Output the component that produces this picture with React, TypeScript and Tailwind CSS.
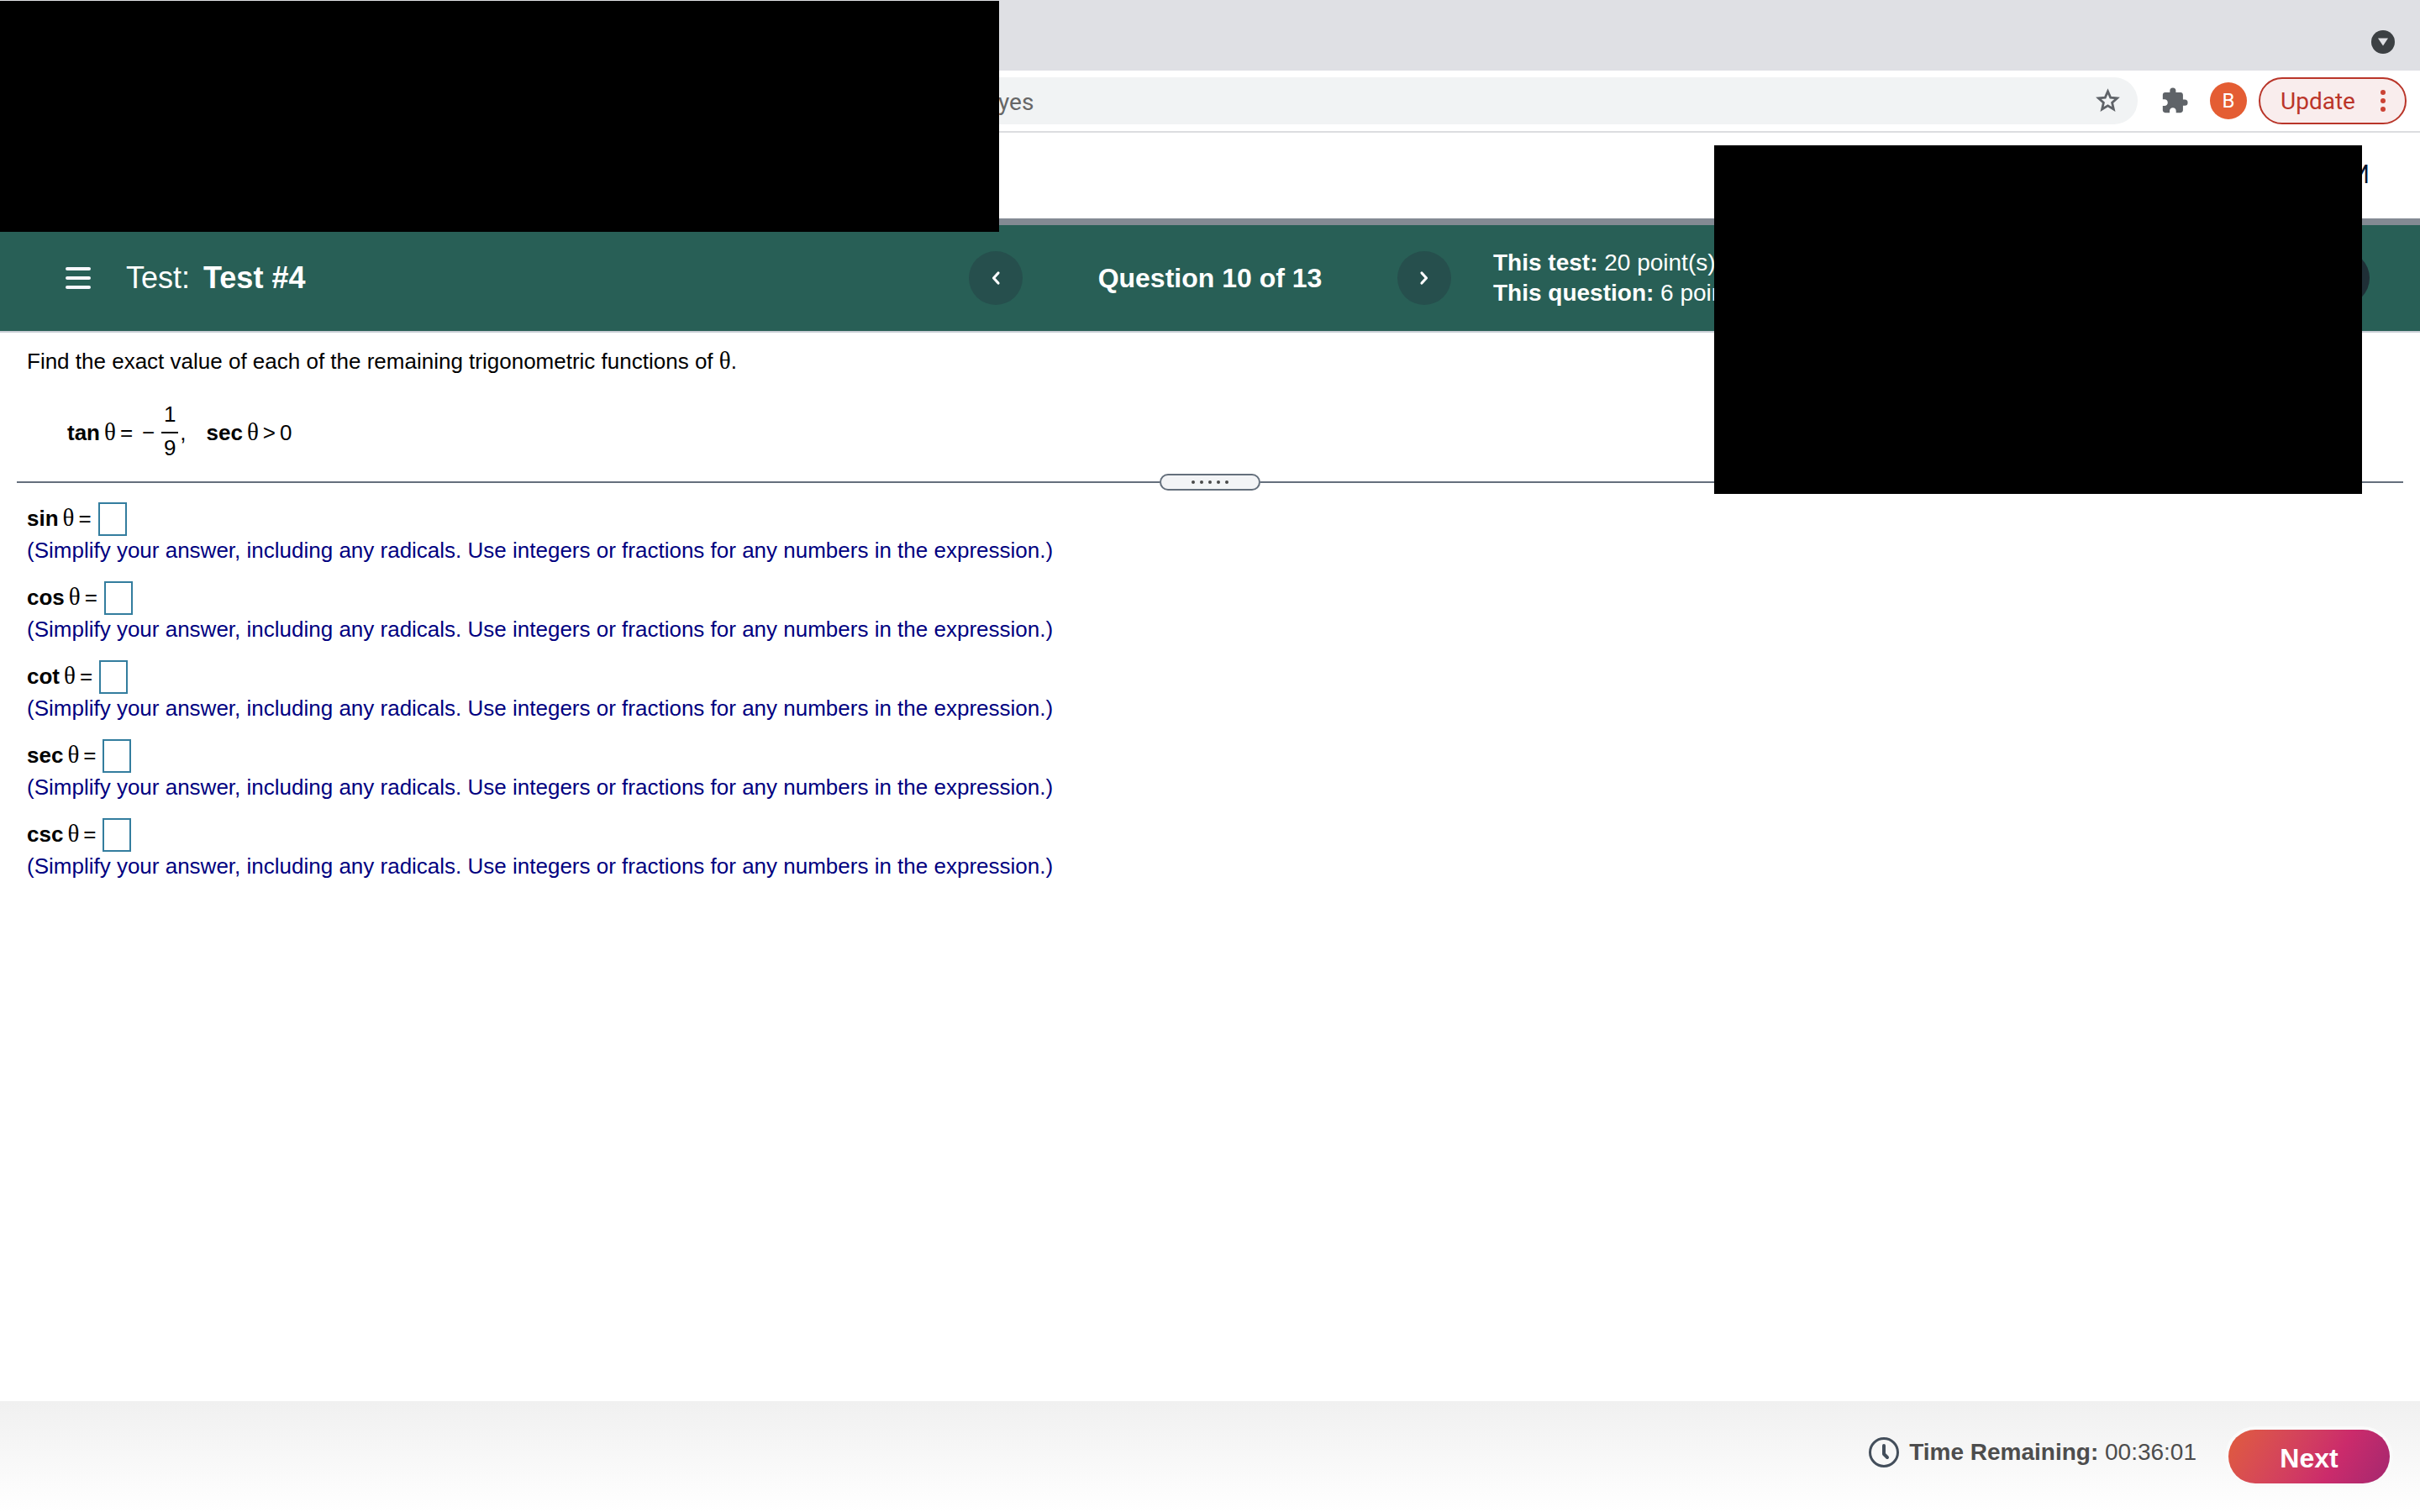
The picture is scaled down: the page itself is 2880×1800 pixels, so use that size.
import { MdExtension } from "react-icons/md"

const functions = ["sin", "cos", "cot", "sec", "csc"]

const Theta = () => (
  <span className="font-['Liberation_Serif',serif] text-[29px] leading-none font-normal">θ</span>
)

const BrowserBar = () => (
  <div className="font-[Roboto,sans-serif]">
    <div className="flex h-[84px] items-center justify-end bg-[#dfe0e4] pt-4 pr-[30px]">
      <button aria-label="Search tabs" className="flex size-7 items-center justify-center rounded-full bg-[#3c4043]">
        <svg viewBox="0 0 14 12" className="h-3 w-[14px]">
          <path d="M1 1.5h12L7 10.5z" fill="#dfe0e4"/>
        </svg>
      </button>
    </div>
    <div className="flex h-[74px] items-center border-b-2 border-[#dcdde0] bg-white pr-4">
      <div className="flex h-14 flex-1 items-center rounded-r-full bg-[#f1f3f4] pr-[21px]">
        <input
          aria-label="Address"
          defaultValue="yes"
          className="h-full min-w-0 flex-1 bg-transparent pt-[2px] pl-[1188px] text-[28px] text-[#666666] outline-none"
        />
        <button aria-label="Bookmark this tab">
          <svg viewBox="0 0 29 30" className="h-[30px] w-[29px]" fill="none" stroke="#5f6368" strokeWidth="2.8">
            <path d="M14.5 3.800l3.200 7.300 7.900.8-6 5.300 1.800 7.800-6.900-4.100L7.600 25l1.800-7.800-6-5.300 7.900-.8z"/>
          </svg>
        </button>
      </div>
      <button aria-label="Extensions" className="ml-[27px]">
        <MdExtension className="size-[34px] text-[#5f6368]"/>
      </button>
      <button className="ml-[25px] size-11 rounded-full bg-[#e45d33] text-2xl text-white">B</button>
      <button className="ml-[14px] flex h-14 w-44 items-center justify-between rounded-full border-2 border-[#b93529] bg-[#f9eded] pr-[23px] pl-6 text-[28px] text-[#bb3529]">
        <span className="pt-[2px]">Update</span>
        <svg viewBox="0 0 6 26" className="h-[26px] w-[6px]" fill="#cb4335">
          <circle cx="3" cy="3" r="3"/>
          <circle cx="3" cy="13" r="3"/>
          <circle cx="3" cy="23" r="3"/>
        </svg>
      </button>
    </div>
  </div>
)

type ArrowButtonProps = {
  label: string
  path: string
}

const ArrowButton = ({label, path}: ArrowButtonProps) => (
  <button aria-label={label} className="flex size-16 items-center justify-center rounded-full bg-[#264f4d]">
    <svg viewBox="0 0 12 18" className="h-[18px] w-3" fill="none" stroke="#fff" strokeWidth="3.2" strokeLinecap="round" strokeLinejoin="round">
      <path d={path}/>
    </svg>
  </button>
)

const TestHeader = () => (
  <header className="grid h-[136px] grid-cols-[1fr_auto_1fr] items-center border-t-8 border-b-2 border-t-[#838a93] border-b-[#c9ced6] bg-[#285f56] text-white">
    <div className="flex items-center pl-[78px] text-4xl">
      <button aria-label="Menu" className="mr-[42px]">
        <svg viewBox="0 0 30 26" className="h-[26px] w-[30px]" stroke="#f8f8ff" strokeWidth="4" strokeLinecap="round">
          <path d="M2 2h26M2 13h26M2 24h26"/>
        </svg>
      </button>
      <h1 className="flex gap-4">Test: <b>Test #4</b></h1>
    </div>
    <div className="flex w-[574px] items-center justify-between">
      <ArrowButton label="Previous question" path="M9 3 3.500 9l5.500 6"/>
      <h2 className="text-[32px] font-bold">Question 10 of 13</h2>
      <ArrowButton label="Next question" path="M3 3l5.500 6L3 15"/>
    </div>
    <div className="flex items-center justify-between pr-[60px] pl-[50px]">
      <div className="text-[28px] leading-9">
        <p><b>This test:</b> 20 point(s)</p>
        <p><b>This question:</b> 6 point(s)</p>
      </div>
      <div className="size-16 rounded-full bg-[#1f2f36]"/>
    </div>
  </header>
)

const Problem = () => (
  <section className="px-8 pt-[18px]">
    <p className="leading-8">
      Find the exact value of each of the remaining trigonometric functions of <Theta/>.
    </p>
    <div className="mt-[30px] flex items-center pl-12 leading-[34px]">
      <span className="flex items-baseline gap-[5px]"><b>tan</b><Theta/><span>=</span></span>
      <span className="ml-[11px]">−</span>
      <span className="ml-2 flex flex-col items-center">
        <span className="w-5 border-b-2 border-black pb-1 text-center">1</span>
        <span className="pb-1">9</span>
      </span>
      <span className="ml-[2px]">,</span>
      <span className="ml-6 flex items-baseline gap-[5px]"><b>sec</b><Theta/><span>&gt;</span><span>0</span></span>
    </div>
  </section>
)

const Divider = () => (
  <div className="mt-[10px] flex items-center px-5">
    <div className="h-[2px] flex-1 bg-[#646f7c]"/>
    <button aria-label="Resize panels" className="flex h-5 w-[120px] items-center justify-center gap-[6px] rounded-full border-2 border-[#646f7c] bg-[#f3f4f6]">
      {
        [0, 1, 2, 3, 4].map((dot) => <span key={dot} className="size-1 rounded-full bg-[#4a4a4a]"/>)
      }
    </button>
    <div className="h-[2px] flex-1 bg-[#646f7c]"/>
  </div>
)

const Answer = ({name}: {name: string}) => (
  <div className="h-[94px] leading-[34px]">
    <div className="flex items-center gap-2">
      <label htmlFor={name} className="flex items-baseline gap-[5px] pb-[2px]"><b>{name}</b><Theta/><span>=</span></label>
      <input id={name} className="h-10 w-[34px] border-2 border-[#337d9e] text-center"/>
    </div>
    <p className="text-[#00007f]">
      (Simplify your answer, including any radicals. Use integers or fractions for any numbers in the expression.)
    </p>
  </div>
)

const Footer = () => (
  <footer className="flex h-[132px] items-center justify-end bg-linear-to-b from-[#f0f0f0] to-white pr-9 text-[#4d4d4d]">
    <div className="flex items-center gap-3 pb-[10px]">
      <svg viewBox="0 0 36 36" className="size-9" fill="none" stroke="#434e5b" strokeLinecap="round" strokeLinejoin="round">
        <circle cx="18" cy="18" r="16.500" strokeWidth="3"/>
        <path d="M18 10v10l4 4" strokeWidth="4"/>
      </svg>
      <p className="text-[28px]"><b>Time Remaining:</b> 00:36:01</p>
    </div>
    <button className="ml-[38px] h-16 w-48 rounded-full bg-linear-120 from-[#e05c3c] via-[#cb2b6b] via-65% to-[#a4276f] pt-1 text-[32px] font-bold text-white ring-4 ring-[#fafafa]">Next</button>
  </footer>
)

const App = () => {
  return (
    <div className="relative flex min-h-screen flex-col overflow-hidden bg-white font-['Liberation_Sans',Arial,sans-serif] text-[26px] text-black">
      <BrowserBar/>
      <div className="flex h-[102px] items-center justify-end pr-[60px] pb-[6px] font-[Lato,sans-serif] text-3xl text-[#05152f]">M</div>
      <TestHeader/>
      <main className="flex-1">
        <Problem/>
        <Divider/>
        <section className="px-8 pt-[14px]">
          {
            functions.map((name) => <Answer key={name} name={name}/>)
          }
        </section>
      </main>
      <Footer/>
      <div className="absolute top-px left-0 h-[275px] w-[1189px] bg-black"/>
      <div className="absolute top-[173px] right-[69px] h-[415px] w-[771px] bg-black"/>
    </div>
  )
}

export default App
